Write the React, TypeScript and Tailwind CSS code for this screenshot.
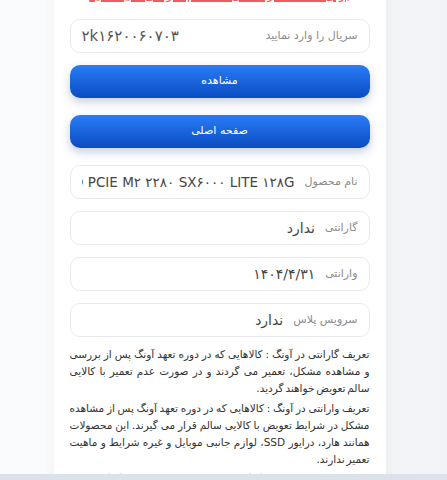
import React from "react";

const fields = [
  { label: "نام محصول", value: "ADATA SSD PCIE M۲ ۲۲۸۰ SX۶۰۰۰ LITE ۱۲۸G", bold: false },
  { label: "گارانتی", value: "ندارد", bold: true },
  { label: "وارانتی", value: "۱۴۰۴/۴/۳۱", bold: true },
  { label: "سرویس پلاس", value: "ندارد", bold: true },
];

function Field({ label, value, bold }: { label: string; value: string; bold: boolean }) {
  return (
    <div className="flex h-[34px] items-center gap-[10px] overflow-hidden rounded-[10px] border border-[#e9eaec] bg-white px-[11px]">
      <span className="shrink-0 text-[11px] text-[#8b8b8b]">{label}</span>
      <span
        className={`min-w-0 flex-1 overflow-hidden whitespace-nowrap text-[#454545] ${bold ? "text-[14px] font-medium" : "text-[13.5px]"}`}
      >
        {value}
      </span>
    </div>
  );
}

export default function App() {
  return (
    <div
      dir="rtl"
      className="min-h-screen bg-gradient-to-l from-[#f1f3f6] to-[#fafbfc] font-['DejaVu_Sans',sans-serif]"
    >
      <div className="mx-auto w-[332px] -translate-x-[4px] bg-white px-4 pb-10 shadow-[0_0_12px_rgba(0,0,0,0.04)]">
        <div className="-mt-[18px] h-[37px] overflow-hidden text-center">
          <span className="text-[13px] leading-[18px] text-[#f25b5b] underline decoration-2">
            برای مشاهده راهنمای استعلام گارانتی کلیک کنید
          </span>
        </div>

        <div className="flex h-[34px] items-center justify-between rounded-[10px] border border-[#e9eaec] px-[11px]">
          <span className="text-[11px] text-[#8b8b8b]">سریال را وارد نمایید</span>
          <span className="text-[15px] text-[#555]">۲k۱۶۲۰۰۶۰۷۰۳</span>
        </div>

        <button className="mt-[12px] flex h-[33px] w-full items-center justify-center rounded-[10px] bg-gradient-to-b from-[#2a7cf6] to-[#0a4cc2] text-[11px] text-white shadow-[0_4px_10px_rgba(30,60,120,0.25)]">
          مشاهده
        </button>
        <button className="mt-[17px] flex h-[33px] w-full items-center justify-center rounded-[10px] bg-gradient-to-b from-[#2a7cf6] to-[#0a4cc2] text-[11px] text-white shadow-[0_4px_10px_rgba(30,60,120,0.25)]">
          صفحه اصلی
        </button>

        <div className="mt-[17px] flex flex-col gap-[12px]">
          {fields.map((f) => (
            <Field key={f.label} {...f} />
          ))}
        </div>

        <div className="mt-[9px] flex flex-col gap-[3px] text-justify text-[10.5px] leading-[17px] text-[#333] [word-spacing:-1.5px]">
          <p>
            <span className="block [text-align-last:justify]">
              تعریف گارانتی در آونگ : کالاهایی که در دوره تعهد آونگ پس از بررسی
            </span>
            <span className="block [text-align-last:justify]">
              و مشاهده مشکل، تعمیر می گردند و در صورت عدم تعمیر با کالایی
            </span>
            سالم تعویض خواهند گردید.
          </p>
          <p>
            تعریف وارانتی در آونگ : کالاهایی که در دوره تعهد آونگ پس از مشاهده مشکل در شرایط تعویض با کالایی سالم قرار
            می گیرند. این محصولات همانند هارد، درایور SSD، لوازم جانبی موبایل و غیره شرایط و ماهیت تعمیر ندارند.
          </p>
          <p>
            تعریف سرویس پلاس در آونگ : کالاهایی که در دوره تعهد آونگ پس از مشاهده مشکل، با هزینه کمتر تعمیر می گردند.
          </p>
        </div>
      </div>
      <div className="fixed inset-x-0 bottom-0 h-[6px] bg-[#dbe2ea]" />
    </div>
  );
}
